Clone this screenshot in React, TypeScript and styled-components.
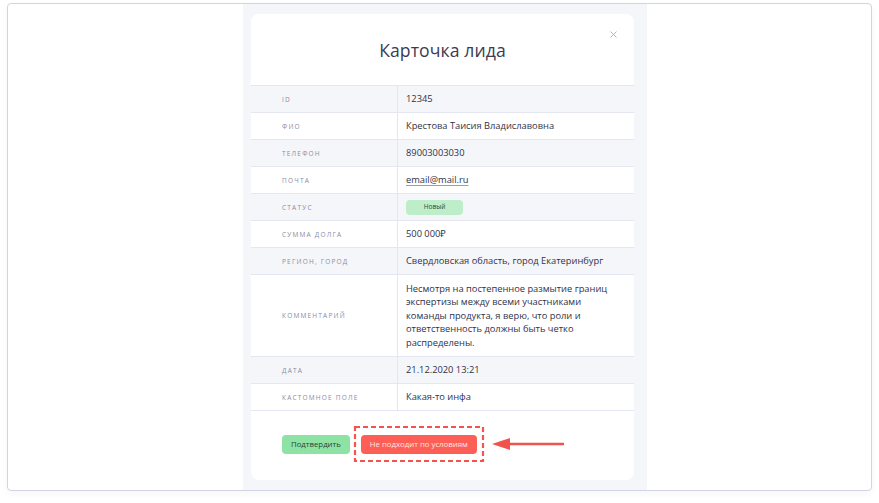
import React from "react";
import styled, { createGlobalStyle } from "styled-components";

const GlobalStyle = createGlobalStyle`
  html, body { margin: 0; padding: 0; background: #ffffff; }
  body { font-family: "Open Sans", "Noto Sans", sans-serif; color: #2f3247; }
  * { box-sizing: border-box; }
`;

const Page = styled.div`
  width: 879px;
  height: 503px;
  padding: 3px 7px 0 7px;
`;

const Frame = styled.div`
  width: 865px;
  height: 488px;
  border: 1px solid #d3d3e6;
  border-radius: 4px;
  box-shadow: 0 3px 6px rgba(40, 40, 80, 0.04);
  display: flex;
  overflow: hidden;
  background: #ffffff;
`;

const Column = styled.div`
  margin-left: 235px;
  width: 404px;
  background: #f5f6fa;
  padding: 10px 13px 10px 8px;
  display: flex;
`;

const Card = styled.div`
  flex: 1;
  background: #ffffff;
  border-radius: 8px;
  overflow: hidden;
  display: flex;
  flex-direction: column;
`;

const Header = styled.div`
  position: relative;
  height: 72px;
  border-bottom: 1px solid #e4e6f1;
  display: flex;
  align-items: center;
  justify-content: center;
  padding-top: 1px;
`;

const Title = styled.h1`
  margin: 0;
  font-size: 17.6px;
  font-weight: 400;
  color: #3a3c54;
  letter-spacing: 0.1px;
`;

const Close = styled.button`
  position: absolute;
  top: 15px;
  right: 16px;
  width: 10px;
  height: 10px;
  padding: 0;
  border: none;
  background: transparent;
  display: flex;
  align-items: center;
  justify-content: center;
`;

const Row = styled.div<{ $striped: boolean }>`
  display: grid;
  grid-template-columns: 147px 1fr;
  min-height: 27px;
  border-bottom: 1px solid #e4e6f1;
  background: ${(p) => (p.$striped ? "#f5f6fa" : "#ffffff")};
`;

const Label = styled.div`
  display: flex;
  align-items: center;
  padding-left: 31px;
  border-right: 1px solid #e4e6f1;
  font-size: 6.5px;
  letter-spacing: 1.2px;
  text-transform: uppercase;
  color: #8a8ca3;
`;

const Value = styled.div<{ $multiline?: boolean }>`
  display: flex;
  align-items: center;
  padding: ${(p) => (p.$multiline ? "7px 8px 7px 8px" : "0 8px")};
  font-size: 9.3px;
  line-height: ${(p) => (p.$multiline ? "13.4px" : "12px")};
  color: #2f3247;
`;

const Comment = styled.span`
  max-width: 214px;
`;

const Mail = styled.span`
  text-decoration: underline;
  text-decoration-color: #9a9cb0;
  text-underline-offset: 2px;
`;

const Badge = styled.span`
  display: inline-flex;
  align-items: center;
  justify-content: center;
  width: 57px;
  height: 15px;
  border-radius: 4px;
  background: #bdedc9;
  color: #2c4a36;
  font-size: 6.5px;
  font-weight: 500;
`;

const Footer = styled.div`
  flex: 1;
  display: flex;
  align-items: flex-start;
  padding: 15px 0 0 31px;
`;

const Button = styled.button<{ $tone: "green" | "red" }>`
  display: block;
  height: 19px;
  margin: 0;
  padding: 0 9px;
  border: none;
  border-radius: 4px;
  font-family: "Open Sans", sans-serif;
  font-size: 7.8px;
  line-height: 19px;
  background: ${(p) => (p.$tone === "green" ? "#8de3a4" : "#fd5f56")};
  color: ${(p) => (p.$tone === "green" ? "#2a4433" : "#ffe4e1")};
`;

const GreenButton = styled(Button)`
  margin-top: 9px;
`;

const Highlight = styled.div`
  position: relative;
  display: flex;
  align-items: flex-start;
  margin-left: 4px;
  padding: 9px 8px 8px 7px;
`;

const DashBox = styled.svg`
  position: absolute;
  inset: 0;
  width: 100%;
  height: 100%;
  overflow: visible;
  pointer-events: none;
`;

const Arrow = styled.svg`
  margin: 11px 0 0 7px;
  width: 72px;
  height: 14px;
  display: block;
`;

type Field = { label: string; value: React.ReactNode; multiline?: boolean };

const fields: Field[] = [
  { label: "ID", value: "12345" },
  { label: "ФИО", value: "Крестова Таисия Владиславовна" },
  { label: "Телефон", value: "89003003030" },
  { label: "Почта", value: <Mail>email@mail.ru</Mail> },
  { label: "Статус", value: <Badge>Новый</Badge> },
  { label: "Сумма долга", value: "500 000₽" },
  { label: "Регион, город", value: "Свердловская область, город Екатеринбург" },
  {
    label: "Комментарий",
    value: (
      <Comment>
        Несмотря на постепенное размытие границ экспертизы между всеми участниками команды
        продукта, я верю, что роли и ответственность должны быть четко распределены.
      </Comment>
    ),
    multiline: true,
  },
  { label: "Дата", value: "21.12.2020 13:21" },
  { label: "Кастомное поле", value: "Какая-то инфа" },
];

export default function App() {
  return (
    <>
      <GlobalStyle />
      <Page>
        <Frame>
          <Column>
            <Card>
              <Header>
                <Title>Карточка лида</Title>
                <Close aria-label="Закрыть">
                  <svg width="7" height="7" viewBox="0 0 7 7">
                    <path d="M0.8 0.8 L6.2 6.2 M6.2 0.8 L0.8 6.2" stroke="#aeb1c6" strokeWidth="1" strokeLinecap="round" />
                  </svg>
                </Close>
              </Header>
              {fields.map((f, i) => (
                <Row key={f.label} $striped={i % 2 === 0}>
                  <Label>{f.label}</Label>
                  <Value $multiline={f.multiline}>{f.value}</Value>
                </Row>
              ))}
              <Footer>
                <GreenButton $tone="green">Подтвердить</GreenButton>
                <Highlight>
                  <DashBox>
                    <rect x="1" y="1" width="128" height="34" fill="none" stroke="#f4544d" strokeWidth="2.2" strokeDasharray="5 3" />
                  </DashBox>
                  <Button $tone="red">Не подходит по условиям</Button>
                </Highlight>
                <Arrow viewBox="0 0 72 14">
                  <line x1="14" y1="7" x2="72" y2="7" stroke="#f0534c" strokeWidth="2.4" />
                  <polygon points="0,7 18,1 18,13" fill="#f0534c" />
                </Arrow>
              </Footer>
            </Card>
          </Column>
        </Frame>
      </Page>
    </>
  );
}
